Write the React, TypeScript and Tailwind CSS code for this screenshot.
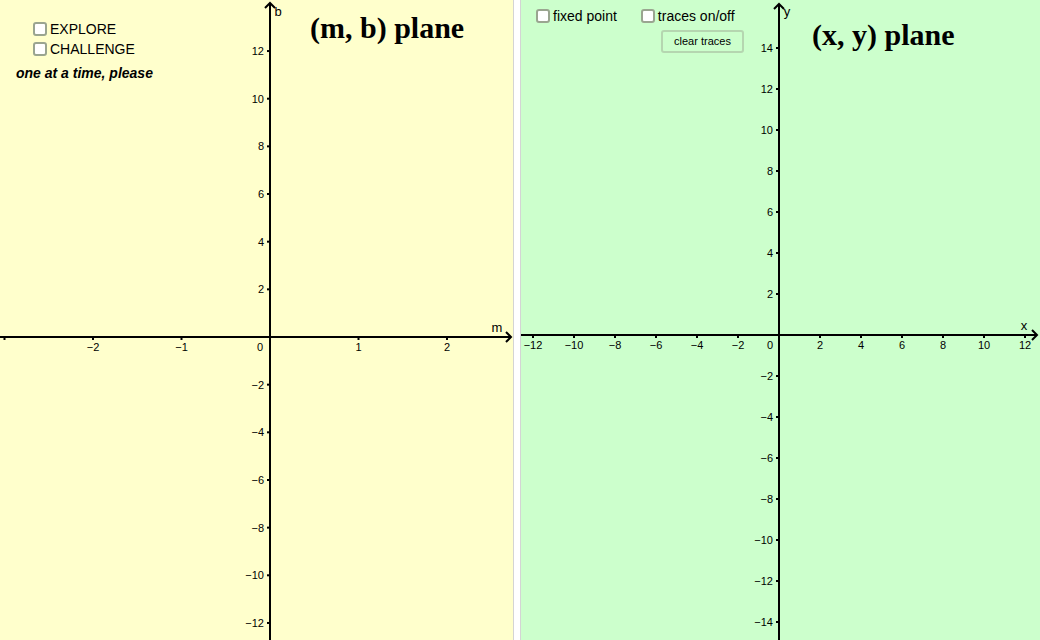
import React from 'react';

const minus = (n: number) => (n < 0 ? `\u2212${Math.abs(n)}` : `${n}`);

const Check = ({ label }: { label: string }) => (
  <label className="flex items-center gap-[3px] text-[14px] leading-[20px] text-black">
    <span className="w-[14px] h-[14px] rounded-[3px] border-2 border-[#9aa590] bg-white" />
    {label}
  </label>
);

const MbAxes = () => {
  const ox = 270;
  const oy = 337;
  const ux = 88.5;
  const uy = 23.83;
  const xs = [-3, -2, -1, 1, 2];
  const ys = [12, 10, 8, 6, 4, 2, -2, -4, -6, -8, -10, -12];
  return (
    <svg className="absolute inset-0" width="513" height="640" style={{ fontFamily: '"Liberation Sans", Arial, sans-serif' }}>
      <line x1="0" y1={oy} x2="511" y2={oy} stroke="#000" strokeWidth="2" />
      <polyline points={`506,${oy - 5} 511,${oy} 506,${oy + 5}`} fill="none" stroke="#000" strokeWidth="2" />
      <line x1={ox} y1="3" x2={ox} y2="640" stroke="#000" strokeWidth="2" />
      <polyline points={`${ox - 5},8 ${ox},3 ${ox + 5},8`} fill="none" stroke="#000" strokeWidth="2" />
      {xs.map((v) => (
        <g key={v}>
          <line x1={ox + v * ux} y1={oy} x2={ox + v * ux} y2={oy + 3} stroke="#000" strokeWidth="2" />
          {v !== -3 && (
            <text x={ox + v * ux} y={oy + 14} fontSize="11" textAnchor="middle" fill="#000">{minus(v)}</text>
          )}
        </g>
      ))}
      {ys.map((v) => (
        <g key={v}>
          <line x1={ox - 3} y1={oy - v * uy} x2={ox} y2={oy - v * uy} stroke="#000" strokeWidth="2" />
          <text x={ox - 6} y={oy - v * uy + 4} fontSize="11" textAnchor="end" fill="#000">{minus(v)}</text>
        </g>
      ))}
      <text x={ox - 10} y={oy + 14} fontSize="11" textAnchor="middle" fill="#000">0</text>
      <text x="497" y="332" fontSize="13" textAnchor="middle" fill="#000">m</text>
      <text x="278" y="16" fontSize="13" textAnchor="middle" fill="#000">b</text>
    </svg>
  );
};

const XyAxes = () => {
  const ox = 258;
  const oy = 335;
  const u = 20.5;
  const xs = [-12, -10, -8, -6, -4, -2, 2, 4, 6, 8, 10, 12];
  const ys = [14, 12, 10, 8, 6, 4, 2, -2, -4, -6, -8, -10, -12, -14];
  return (
    <svg className="absolute inset-0" width="519" height="640" style={{ fontFamily: '"Liberation Sans", Arial, sans-serif' }}>
      <line x1="0" y1={oy} x2="516" y2={oy} stroke="#000" strokeWidth="2" />
      <polyline points={`511,${oy - 5} 516,${oy} 511,${oy + 5}`} fill="none" stroke="#000" strokeWidth="2" />
      <line x1={ox} y1="4" x2={ox} y2="640" stroke="#000" strokeWidth="2" />
      <polyline points={`${ox - 5},9 ${ox},4 ${ox + 5},9`} fill="none" stroke="#000" strokeWidth="2" />
      {xs.map((v) => (
        <g key={v}>
          <line x1={ox + v * u} y1={oy} x2={ox + v * u} y2={oy + 3} stroke="#000" strokeWidth="2" />
          <text x={ox + v * u} y={oy + 14} fontSize="11" textAnchor="middle" fill="#000">{minus(v)}</text>
        </g>
      ))}
      {ys.map((v) => (
        <g key={v}>
          <line x1={ox - 3} y1={oy - v * u} x2={ox} y2={oy - v * u} stroke="#000" strokeWidth="2" />
          <text x={ox - 6} y={oy - v * u + 4} fontSize="11" textAnchor="end" fill="#000">{minus(v)}</text>
        </g>
      ))}
      <text x={ox - 9} y={oy + 14} fontSize="11" textAnchor="middle" fill="#000">0</text>
      <text x="503" y="330" fontSize="13" textAnchor="middle" fill="#000">x</text>
      <text x="266" y="16" fontSize="13" textAnchor="middle" fill="#000">y</text>
    </svg>
  );
};

export default function App() {
  return (
    <div className="flex w-[1040px] h-[640px] overflow-hidden font-['Liberation_Sans',Arial,sans-serif]">
      <div className="relative w-[513px] h-full bg-[#ffffcc]">
        <MbAxes />
        <div className="absolute left-[33px] top-[19px] flex flex-col">
          <Check label="EXPLORE" />
          <Check label="CHALLENGE" />
        </div>
        <div className="absolute left-[16px] top-[63px] text-[14px] font-bold italic text-black">one at a time, please</div>
        <div className="absolute left-[310px] top-[9px] font-['Liberation_Serif',serif] font-bold text-[30px] leading-[38px] text-black">
          (m, b) plane
        </div>
      </div>
      <div className="w-[8px] h-full bg-white border-x border-[#d4d4d4]" />
      <div className="relative flex-1 h-full bg-[#ccffcc]">
        <XyAxes />
        <div className="absolute left-[15px] top-[6px] flex gap-[24px]">
          <Check label="fixed point" />
          <Check label="traces on/off" />
        </div>
        <button className="absolute left-[140px] top-[30px] w-[83px] h-[23px] rounded-[3px] border-2 border-[#b5d6b0] bg-[#ccffcc] text-[11px] text-black">
          clear traces
        </button>
        <div className="absolute left-[291px] top-[16px] font-['Liberation_Serif',serif] font-bold text-[30px] leading-[38px] text-black">
          (x, y) plane
        </div>
      </div>
    </div>
  );
}
